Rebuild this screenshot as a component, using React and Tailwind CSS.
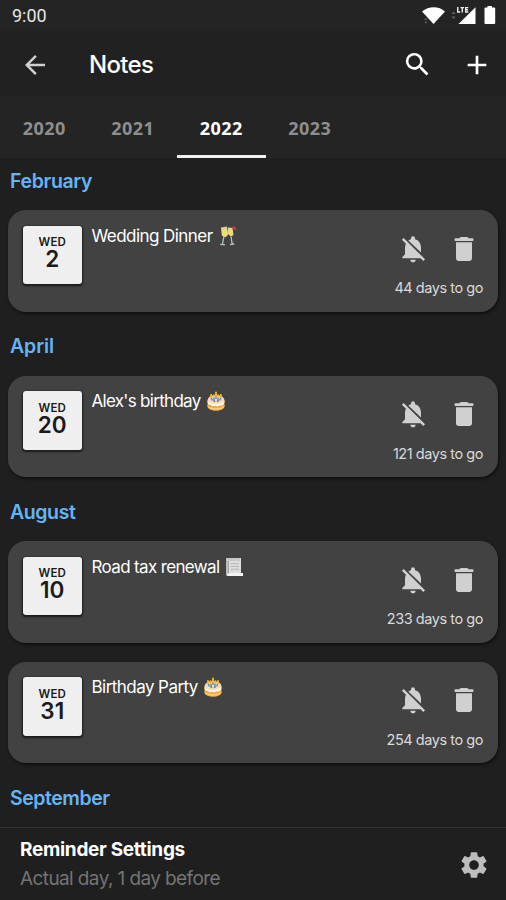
import { MdArrowBack, MdSearch, MdAdd, MdDelete, MdSettings } from 'react-icons/md';

const YEARS = ['2020', '2021', '2022', '2023'];

const MONTHS = [
  {
    name: 'February',
    tracking: 'tracking-[-0.35px]',
    notes: [{ day: '2', title: 'Wedding Dinner', tracking: 'tracking-[-0.55px]', icon: Glasses, left: '44 days to go' }],
  },
  {
    name: 'April',
    tracking: 'tracking-[-0.1px]',
    notes: [{ day: '20', title: "Alex's birthday", tracking: 'tracking-[-0.7px]', icon: Cake, left: '121 days to go' }],
  },
  {
    name: 'August',
    tracking: 'tracking-[-0.4px]',
    notes: [
      { day: '10', title: 'Road tax renewal', tracking: 'tracking-[-0.65px]', icon: Scroll, left: '233 days to go' },
      { day: '31', title: 'Birthday Party', tracking: 'tracking-[-0.55px]', icon: Cake, left: '254 days to go' },
    ],
  },
];

function Glasses() {
  return (
    <svg viewBox="0 0 20 20" className="w-5 h-5">
      <path d="M3 1.500 9 .5l1 8-2.200 2.800-4-1.600z" fill="#d9d3a0" />
      <path d="m4 4 5-1.200.7 5.500-2 2.400-3-1.400z" fill="#f0df6e" />
      <path d="m10 1.500 4.500.6 1 7-2.700 1.400L10 8z" fill="#dfd49a" />
      <path d="m10.500 3.500 4 .5.500 5-2 1-2.500-2.500z" fill="#edda72" />
      <path d="m6 10-1.500 8M2.200 18.300l4.800.5M13 10.500l1.200 7.700M12 18.600l4.300-.6" stroke="#b8c0c1" strokeWidth="1.300" fill="none" />
      <path d="m14 2 2.500-.5 1 2.500" stroke="#d9453a" strokeWidth="1.600" fill="none" />
    </svg>
  );
}

function Cake() {
  return (
    <svg viewBox="0 0 20 20" className="w-5 h-5">
      <path d="M1.500 9.500v5.500c0 6.300 17 6.300 17 0V9.500z" fill="#f5a93b" />
      <path d="M1.500 14.500c2 3.500 15 3.500 17 0v1c-1.500 4.300-15.500 4.300-17 0z" fill="#fbcf80" />
      <ellipse cx="10" cy="9.500" rx="8.500" ry="5.500" fill="#f6dcb8" />
      <path d="M1.500 10c0 4 2 4.500 3 3.500 1.500 2.500 3.500 1.500 4.500 1 2 1.500 3.500 1 4.500-.5 2 1.500 5 0 5-4-3 4-14 4-17 0z" fill="#fff5e6" />
      <path d="m5 6.500 1.500 3M7.800 7l.7 4M12.200 7l-.7 4M15 6.500l-1.500 3M10 5v3" stroke="#4c8fc9" strokeWidth="1.500" />
      <path d="M7.500 10h1.600M11 10h1.600" stroke="#d74f4b" strokeWidth="1.200" />
      <path d="M5 4v2M7.600 4.300v2M10 1.500v3.200M12.400 4.300v2M15 4v2" stroke="#f7b52f" strokeWidth="1.900" strokeLinecap="round" />
    </svg>
  );
}

function Scroll() {
  return (
    <svg viewBox="0 0 20 20" className="w-5 h-5">
      <path d="M2.500 1H17v15.500H4.500V4.500H2z" fill="#dedede" />
      <path d="M2.500 1H16v3H2z" fill="#c8c8c8" />
      <path d="M5.500 16H19v3H4c-2.500 0-2.500-3 .5-3z" fill="#f4f4f4" />
      <path d="M2 4.500h2.500V17c-3 .5-2.500 1-2.500-1z" fill="#bcbcbc" />
      <path d="M6.500 6.700h8.500M6.500 9.500h8.500M6.500 12.300h8.500" stroke="#b5b5b5" strokeWidth="1.100" />
    </svg>
  );
}

function BellOff() {
  return (
    <svg viewBox="0 0 24 24" fill="currentColor" className="w-[32px] h-[32px]">
      <path d="M20.300 19 5 3.700 3.700 5l3 3c-.5 1-.7 2-.7 3.200V16l-2 2v1h13.700l2 2 1.300-1.300z" />
      <path d="M12 22c1.100 0 2-.9 2-2h-4c0 1.100.9 2 2 2zM18 14.700v-3.700c0-3.100-1.600-5.600-4.500-6.300V4a1.500 1.500 0 0 0-3 0v.7c-.8.200-1.400.5-2 .9z" />
    </svg>
  );
}

function StatusBar() {
  return (
    <div className="h-[31px] shrink-0 bg-[#242424] flex items-center justify-between pl-3 pr-[9px]">
      <span className="font-[Roboto] text-[18px] text-[#e4e4e4]">9:00</span>
      <div className="flex items-center h-full">
        <svg width="86" height="31" viewBox="0 0 86 31" fill="#fff">
          <path d="M11 11.500C17.500 5.800 28 5.800 34 11.500L22.500 24z" />
          <path d="m12.800 20 2-2.200 2 2.200zM12.800 21.500l2 2.200 2-2.200z" fill="#555" />
          <path d="m40.500 14 2-2.500 2 2.500zM40.500 16.500l2 2.500 2-2.500z" fill="#666" />
          <path d="M64.500 7.200V24h-17z" />
          <path d="M46.700 7v5h2.500M49.500 7.600h3.600M51.300 7.600V12.500M57.300 7.600H54.700V12h2.600M54.700 9.800h2.400" fill="none" stroke="#242424" strokeWidth="3.500" />
          <path d="M46.700 7v5h2.500M49.500 7.600h3.600M51.300 7.600V12.500M57.300 7.600H54.700V12h2.600M54.700 9.800h2.400" fill="none" stroke="#eee" strokeWidth="1.400" />
          <path d="M74.500 7.500h2V6h4.500v1.500h2.200q1 0 1 1V23q0 1-1 1h-8.700q-1 0-1-1V8.500q0-1 1-1z" />
        </svg>
      </div>
    </div>
  );
}

function NoteCard({ note }) {
  const Icon = note.icon;
  return (
    <article className="h-[101.500px] bg-[#424242] rounded-[18px] pl-[15px] pr-[15px] pt-[15.500px] flex justify-between shadow-[1px_2px_3px_rgba(0,0,0,0.5)]">
      <div className="flex">
        <div className="w-[58.500px] h-[58.500px] bg-[#efefef] rounded-[3px] text-[#1b1b1b] flex flex-col items-center pt-[9.500px] shadow-[0_1px_2px_1px_rgba(0,0,0,0.6)]">
          <span className="text-[11.500px] leading-[14px] font-semibold tracking-[0.1px]">WED</span>
          <span className="text-[22.500px] leading-[22px] -mt-px font-semibold">{note.day}</span>
        </div>
        <div className="flex h-5 items-center gap-[5px] ml-[10px] text-white">
          <span className={`text-[17px] leading-5 whitespace-nowrap ${note.tracking}`}>{note.title}</span>
          <Icon />
        </div>
      </div>
      <div className="flex flex-col items-end pt-[7px] text-[#d0d0d0]">
        <div className="flex gap-[19px] pr-[3px]">
          <BellOff />
          <MdDelete className="w-[32px] h-[32px]" />
        </div>
        <span className="text-[14.500px] leading-[18px] mt-[14.500px] tracking-[-0.45px] text-[#dadada]">{note.left}</span>
      </div>
    </article>
  );
}

function MonthTitle({ tracking, children }) {
  return <h2 className={`text-[19.500px] leading-6 font-semibold text-[#64b5f6] pl-[2px] ${tracking}`}>{children}</h2>;
}

export default function App() {
  return (
    <div className="w-[506px] h-[900px] overflow-hidden flex flex-col bg-[#1f1f1f] font-[Inter,sans-serif]">
      <StatusBar />
      <header className="h-[65px] shrink-0 bg-[#212121] flex items-center pl-[20px] pr-[13px] pt-[2px] text-white">
        <MdArrowBack className="w-[30px] h-[30px] text-[#cfcfcf]" />
        <h1 className="ml-[39px] text-[24px] font-medium tracking-[-0.7px]">Notes</h1>
        <MdSearch className="ml-auto w-[31px] h-[31px]" />
        <MdAdd className="ml-[28px] w-[32px] h-[32px]" />
      </header>

      <nav className="h-[62px] shrink-0 bg-[#242424] flex">
        {YEARS.map((year) => (
          <button
            key={year}
            className={`w-[88.500px] pt-[5px] border-b-[3px] font-['Noto_Sans'] text-[18px] font-bold tracking-[0.4px] ${
              year === '2022' ? 'text-white border-[#f2f2f2]' : 'text-[#8e8e8e] border-transparent'
            }`}
          >
            {year}
          </button>
        ))}
      </nav>

      <main className="flex-1 min-h-0 overflow-hidden px-2 pt-[10.500px]">
        {MONTHS.map((month) => (
          <section key={month.name} className="pb-[22.500px]">
            <MonthTitle tracking={month.tracking}>{month.name}</MonthTitle>
            <div className="flex flex-col gap-[19px] pt-[17.500px]">
              {month.notes.map((note) => (
                <NoteCard key={note.day} note={note} />
              ))}
            </div>
          </section>
        ))}
        <MonthTitle tracking="tracking-[-0.45px]">September</MonthTitle>
      </main>

      <footer className="h-[73px] shrink-0 border-t-[1.500px] border-[#343434] flex items-center justify-between pl-5 pr-[16px] pt-px">
        <div>
          <p className="text-[19px] leading-6 font-bold tracking-[-0.3px] text-white">Reminder Settings</p>
          <p className="text-[19px] leading-6 mt-[5px] tracking-[-0.6px] text-[#747474]">Actual day, 1 day before</p>
        </div>
        <MdSettings className="w-[32px] h-[32px] text-[#bdbdbd]" />
      </footer>
    </div>
  );
}
